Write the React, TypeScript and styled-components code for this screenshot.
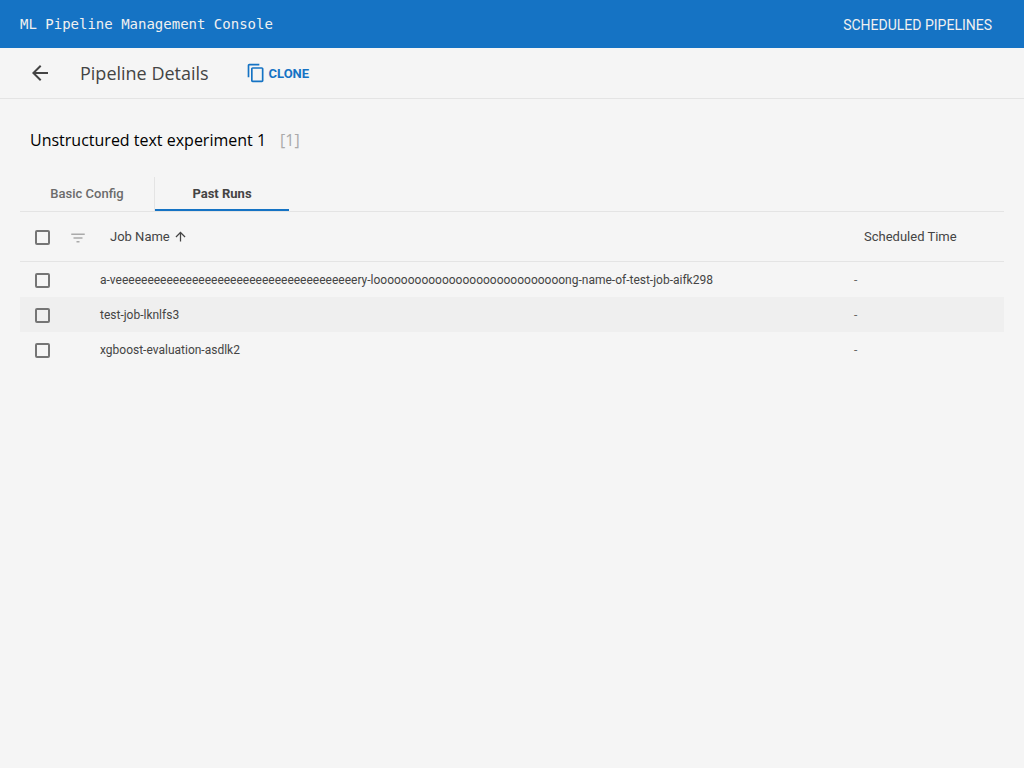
import React from 'react';
import styled, { createGlobalStyle } from 'styled-components';

const Global = createGlobalStyle`
  *, *::before, *::after { box-sizing: border-box; }
  body { margin: 0; background: #f5f5f5; color: #444; font-family: Roboto, sans-serif; }
  button { margin: 0; padding: 0; border: 0; background: none; font: inherit; color: inherit; }
`;

const Page = styled.div`
  display: flex;
  flex-direction: column;
  min-height: 100vh;
`;

const Header = styled.header`
  display: flex;
  align-items: center;
  justify-content: space-between;
  height: 48px;
  padding: 0 32px 0 20px;
  background: #1573c4;
  color: #f0f0f0;
`;

const Brand = styled.div`
  font: 14px/20px 'DejaVu Sans Mono', monospace;
`;

const NavLink = styled.div`
  padding-top: 2px;
  font-size: 14px;
  line-height: 20px;
  text-transform: uppercase;
`;

const Toolbar = styled.div`
  display: flex;
  align-items: center;
  height: 51px;
  padding-left: 30px;
  border-bottom: 1px solid #e4e4e4;
`;

const Icon = styled.svg<{ $size: number }>`
  display: block;
  flex: none;
  width: ${(p) => p.$size}px;
  height: ${(p) => p.$size}px;
  fill: currentColor;
`;

const BackButton = styled.button`
  width: 50px;
`;

const PageTitle = styled.h1`
  width: 166px;
  margin: 0;
  font: 400 18px/24px 'Open Sans', sans-serif;
`;

const CloneButton = styled.button`
  display: flex;
  align-items: center;
  gap: 2.5px;
  color: #1573c4;
  font-size: 13px;
  font-weight: 700;
  text-transform: uppercase;
`;

const Content = styled.main`
  padding: 0 20px;
`;

const PipelineName = styled.h2`
  display: flex;
  gap: 14px;
  height: 78px;
  margin: 0;
  padding: 29px 10px 0;
  color: #000;
  font: 400 16px/24px 'Open Sans', sans-serif;
`;

const PipelineId = styled.span`
  color: #aaa;
`;

const Tabs = styled.div`
  display: flex;
  height: 35px;
  border-bottom: 1px solid #e4e4e4;
`;

const Tab = styled.button<{ $active?: boolean }>`
  width: ${(p) => (p.$active ? 134 : 135)}px;
  padding-bottom: 2px;
  border-right: ${(p) => (p.$active ? '0' : '1px solid #e4e4e4')};
  box-shadow: ${(p) => (p.$active ? 'inset 0 -2px #1573c4' : 'none')};
  color: ${(p) => (p.$active ? '#444' : '#6b6b6b')};
  font-size: 13px;
  font-weight: ${(p) => (p.$active ? 700 : 500)};
`;

const HeaderRow = styled.div`
  display: flex;
  align-items: center;
  height: 50px;
  padding-left: 15px;
  border-bottom: 1px solid #e4e4e4;
  font-size: 13px;
`;

const Row = styled.div<{ $shaded?: boolean }>`
  display: flex;
  align-items: center;
  height: 35px;
  padding-left: 15px;
  background: ${(p) => (p.$shaded ? '#efefef' : 'transparent')};
  font-size: 12px;
`;

const Checkbox = styled.span`
  flex: none;
  width: 15px;
  height: 15px;
  margin-top: 1px;
  border: 2px solid #757575;
  border-radius: 2px;
`;

const FilterButton = styled.button`
  width: 41px;
  margin-left: 19px;
  padding-top: 2px;
  color: #aaa;
`;

const NameHeading = styled.div`
  display: flex;
  align-items: center;
  gap: 3px;
  width: 754px;
`;

const NameCell = styled.div`
  width: 754px;
  margin-left: 50px;
`;

const TimeCell = styled.div`
  color: #666;
`;

const jobs = [
  'a-veeeeeeeeeeeeeeeeeeeeeeeeeeeeeeeeeeeeeery-loooooooooooooooooooooooooooong-name-of-test-job-aifk298',
  'test-job-lknlfs3',
  'xgboost-evaluation-asdlk2',
];

export default function App() {
  return (
    <Page>
      <Global />
      <Header>
        <Brand>ML Pipeline Management Console</Brand>
        <NavLink>Scheduled Pipelines</NavLink>
      </Header>
      <Toolbar>
        <BackButton aria-label="Back">
          <Icon $size={20} viewBox="2 2 20 20">
            <path d="M20 11H7.83l5.59-5.59L12 4l-8 8 8 8 1.41-1.41L7.83 13H20v-2z" />
          </Icon>
        </BackButton>
        <PageTitle>Pipeline Details</PageTitle>
        <CloneButton>
          <Icon $size={20} viewBox="0 0 24 24">
            <path d="M16 1H4c-1.1 0-2 .9-2 2v14h2V3h12V1zm3 4H8c-1.1 0-2 .9-2 2v14c0 1.1.9 2 2 2h11c1.1 0 2-.9 2-2V7c0-1.1-.9-2-2-2zm0 16H8V7h11v14z" />
          </Icon>
          Clone
        </CloneButton>
      </Toolbar>
      <Content>
        <PipelineName>
          Unstructured text experiment 1<PipelineId>[1]</PipelineId>
        </PipelineName>
        <Tabs>
          <Tab>Basic Config</Tab>
          <Tab $active>Past Runs</Tab>
        </Tabs>
        <HeaderRow>
          <Checkbox />
          <FilterButton aria-label="Filter">
            <Icon $size={18} viewBox="0 0 24 24">
              <path d="M10 18h4v-2h-4v2zM3 6v2h18V6H3zm3 7h12v-2H6v2z" />
            </Icon>
          </FilterButton>
          <NameHeading>
            Job Name
            <Icon $size={15} viewBox="0 0 24 24">
              <path d="M4 12l1.41 1.41L11 7.83V20h2V7.83l5.58 5.59L20 12l-8-8-8 8z" />
            </Icon>
          </NameHeading>
          <div>Scheduled Time</div>
        </HeaderRow>
        {jobs.map((job, i) => (
          <Row key={job} $shaded={i % 2 === 1}>
            <Checkbox />
            <NameCell>{job}</NameCell>
            <TimeCell>-</TimeCell>
          </Row>
        ))}
      </Content>
    </Page>
  );
}
